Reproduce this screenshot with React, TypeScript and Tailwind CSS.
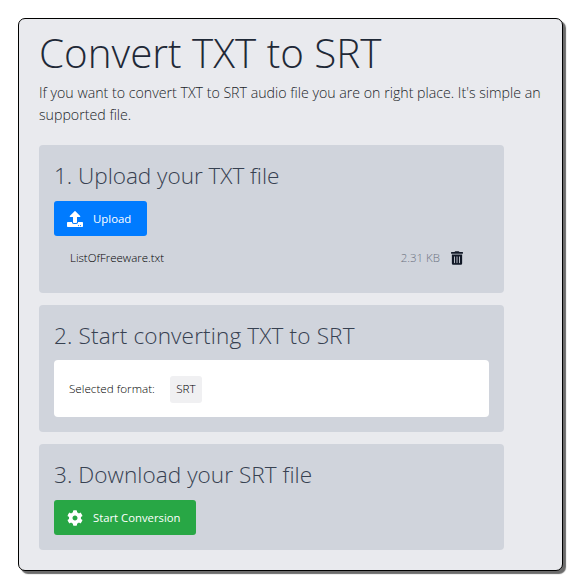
import { FaUpload, FaCog, FaTrashAlt } from "react-icons/fa";

export default function App() {
  return (
    <div className="w-[580px] h-[588px] bg-white pt-[18px] pl-[18px] font-['Open_Sans',sans-serif]">
      <div className="w-[545px] h-[553px] rounded-[7px] border border-black bg-[#e9eaee] shadow-[3px_3px_1px_#6b6b6b] pl-5 pt-[7px]">
        <div className="w-[502px] overflow-hidden">
          <h1 className="w-[560px] whitespace-nowrap text-[40.4px] leading-[54px] font-light text-[#1f2937]">Convert TXT to SRT</h1>
          <p className="w-[560px] whitespace-nowrap mt-[2px] text-[14.2px] leading-[22px] font-light text-[#212529]">
            If you want to convert TXT to SRT audio file you are on right place. It's simple and
            <br />
            supported file.
          </p>
        </div>
        <div className="mt-[19px] flex w-[465px] flex-col gap-3">
          <section className="h-[148px] rounded bg-[#d0d4dc] px-[15px] pt-[15px]">
            <h2 className="text-[22.6px] leading-[32px] font-light tracking-[-0.04px] text-[#374151]">1. Upload your TXT file</h2>
            <button className="mt-[9px] flex h-[35px] w-[93px] items-center rounded-[3px] bg-[#007bff] pl-[13px] text-[11.4px] text-white">
              <FaUpload className="h-4 w-4" />
              <span className="ml-[10px]">Upload</span>
            </button>
            <div className="mt-[12px] flex h-[20px] items-center pl-4 pr-[26px] text-[11.5px] font-light text-black">
              <span>ListOfFreeware.txt</span>
              <span className="ml-auto text-[#6b7280]">2.31 KB</span>
              <FaTrashAlt className="ml-[11px] h-[14px] w-[12px] text-[#111827]" />
            </div>
          </section>
          <section className="h-[127px] rounded bg-[#d0d4dc] px-[15px] pt-[15px]">
            <h2 className="text-[22.6px] leading-[32px] font-light tracking-[0.13px] text-[#374151]">2. Start converting TXT to SRT</h2>
            <div className="mt-[8px] flex h-[57px] items-center rounded bg-white pl-[15px] pt-px text-[11.7px] font-light text-black">
              <span>Selected format:</span>
              <span className="ml-[15px] flex h-[27px] w-[32px] items-center justify-center rounded-[3px] bg-[#f0f0f2]">SRT</span>
            </div>
          </section>
          <section className="h-[106px] rounded bg-[#d0d4dc] px-[15px] pt-[15px]">
            <h2 className="text-[22.6px] leading-[32px] font-light tracking-[0.04px] text-[#374151]">3. Download your SRT file</h2>
            <button className="mt-[9px] flex h-[35px] w-[142px] items-center rounded-[3px] bg-[#28a745] pl-[13px] text-[11.3px] text-white">
              <FaCog className="h-4 w-4" />
              <span className="ml-[10px] pt-px">Start Conversion</span>
            </button>
          </section>
        </div>
      </div>
    </div>
  );
}
